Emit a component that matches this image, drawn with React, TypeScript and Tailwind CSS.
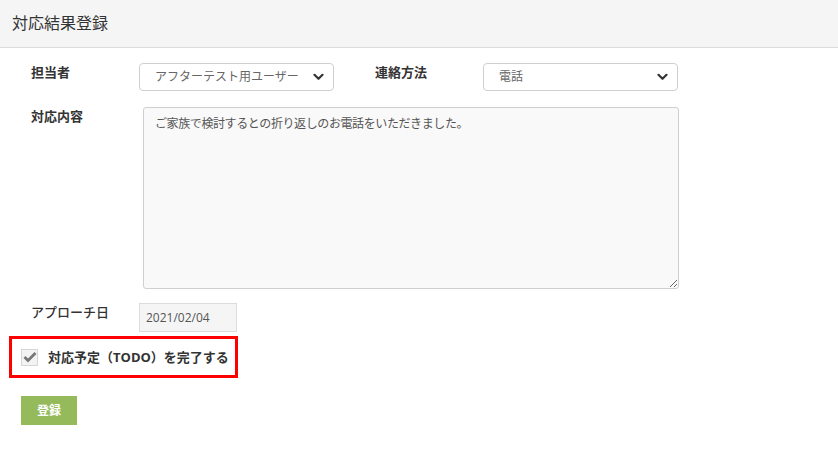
import React from 'react';

const font = { fontFamily: '"Open Sans", "Noto Sans CJK JP", sans-serif' };

const Chevron = () => (
  <svg width="11" height="8" viewBox="0 0 11 8" className="shrink-0">
    <path d="M1.5 1.8 L5.5 5.8 L9.5 1.8" fill="none" stroke="#333" strokeWidth="2.2" strokeLinecap="round" strokeLinejoin="round" />
  </svg>
);

const FakeSelect = ({ value }: { value: string }) => (
  <div className="flex h-[28px] w-[195px] items-center justify-between rounded-[4px] border border-[#cfcfcf] bg-white pl-[15px] pr-[9px] text-[12px] text-[#666]">
    <span className="leading-none">{value}</span>
    <Chevron />
  </div>
);

const Label = ({ children, className = '' }: { children: React.ReactNode; className?: string }) => (
  <div className={`text-[13px] leading-[18px] text-[#333] ${className}`}>{children}</div>
);

export default function App() {
  return (
    <div className="h-[465px] w-[838px] overflow-hidden bg-white" style={font}>
      {/* Header */}
      <header className="flex h-[48px] items-center border-b border-[#dcdcdc] bg-[#f5f5f5] pb-[1px] pl-[12px]">
        <h1 className="text-[16px] font-normal leading-none text-[#333]">対応結果登録</h1>
      </header>

      <div className="flex flex-col pt-[15px]">
        {/* 担当者 / 連絡方法 */}
        <div className="flex items-start pl-[31px]">
          <Label className="w-[108px] font-bold">担当者</Label>
          <FakeSelect value="アフターテスト用ユーザー" />
          <Label className="ml-[41px] w-[108px] font-bold">連絡方法</Label>
          <FakeSelect value="電話" />
        </div>

        {/* 対応内容 */}
        <div className="mt-[16px] flex items-start pl-[31px]">
          <Label className="w-[112px] font-bold">対応内容</Label>
          <textarea
            readOnly
            defaultValue="ご家族で検討するとの折り返しのお電話をいただきました。"
            className="h-[182px] w-[536px] resize rounded-[3px] border border-[#cfcfcf] bg-[#f9f9f9] px-[11px] py-[7px] text-[12px] leading-[18px] tracking-[-0.4px] text-[#555] outline-none"
            style={font}
          />
        </div>

        {/* アプローチ日 */}
        <div className="mt-[14px] flex items-start pl-[31px]">
          <Label className="w-[108px] font-medium">アプローチ日</Label>
          <div className="flex h-[29px] w-[98px] items-center border border-[#dcdcdc] bg-[#f5f5f5] pl-[6px] text-[12px] text-[#555]">
            2021/02/04
          </div>
        </div>

        {/* TODO完了 */}
        <div className="ml-[9px] mt-[4px] flex h-[42px] w-[229px] items-center border-[3px] border-[#ff0000] pl-[9px]">
          <div className="flex h-[17px] w-[17px] items-center justify-center border border-[#d6d6d6] bg-[#f3f3f3]">
            <svg width="14" height="12" viewBox="0 0 14 12">
              <path d="M1.5 6 L5 9.5 L12.5 2" fill="none" stroke="#777" strokeWidth="2.8" />
            </svg>
          </div>
          <span className="ml-[10px] text-[13px] font-bold leading-none text-[#333]">対応予定（TODO）を完了する</span>
        </div>

        {/* 登録 */}
        <div className="pl-[21px] pt-[18px]">
          <button className="flex h-[29px] w-[56px] items-center justify-center bg-[#94ba5c] text-[12px] font-bold text-white">
            登録
          </button>
        </div>
      </div>
    </div>
  );
}
